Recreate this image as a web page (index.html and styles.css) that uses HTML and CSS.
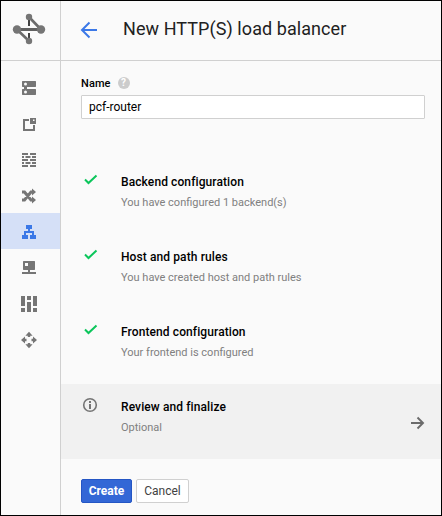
FILE: index.html
```html
<!DOCTYPE html>
<html lang="en">
<head>
<meta charset="utf-8">
<title>New HTTP(S) load balancer</title>
<link rel="stylesheet" href="styles.css">
</head>
<body>
<div class="window">
  <aside class="sidebar">
    <div class="product">
      <svg class="logo" viewBox="0 0 34 34"><path d="M17 5v9M17 21v8" stroke="#424242" stroke-width="2"/><path d="M17 5l12 12.500M5 17.500L17 29" stroke="#6b6b6b" stroke-width="2.600"/><path d="M5 17.500h24" stroke="#616161" stroke-width="3"/><g fill="#757575"><circle cx="5" cy="17.500" r="4.200"/><circle cx="29" cy="17.500" r="4.200"/><circle cx="17" cy="5" r="3.200"/><circle cx="17" cy="29" r="3.200"/></g></svg>
    </div>
    <nav class="nav">
      <a class="item"><svg viewBox="0 0 18 18"><path fill-rule="evenodd" d="M2.500 3h13l.5.5v5l-.5.500H7v2h8.500l.5.500v5l-.5.500h-13l-.5-.5v-5l.5-.500H4V9H2.500L2 8.500v-5zM5.500 4.600a1.500 1.500 0 1 0 0 3a1.500 1.500 0 1 0 0-3zM5.500 12.500a1.500 1.500 0 1 0 0 3a1.500 1.500 0 1 0 0-3z"/></svg></a>
      <a class="item"><svg viewBox="0 0 18 18"><path d="M3 5h6v2H5v8h8v-4h2v6H3z"/><path fill-rule="evenodd" d="M10 4h6v6h-6zM13 5.500v1.500h1.500V5.500z"/></svg></a>
      <a class="item"><svg viewBox="0 0 18 18"><path d="M2 3h6v2H2zM10 3h6v2h-6zM2 6h2v2H2zM5.500 6h5v2h-5zM12 6h4v2h-4zM2 9h6v2H2zM10 9h6v2h-6zM2 12h2v2H2zM5.500 12h5v2h-5zM12 12h4v2h-4zM2 15h6v2H2zM10 15h6v2h-6z"/></svg></a>
      <a class="item"><svg viewBox="0 0 18 18"><path d="M2 6h2.500l6.500 8h2M2 14h2.500l6.500-8h2" fill="none" stroke="currentColor" stroke-width="3"/><path d="M12 2.600L16 6l-4 3.500zM12 10.500L16 14l-4 3.500z"/></svg></a>
      <a class="item active"><svg viewBox="0 0 18 18"><path d="M6 3h6v4h-2v2h4v4h2v4h-6v-4h2v-2H6v2h2v4H2v-4h2V9h4V7H6z"/></svg></a>
      <a class="item"><svg viewBox="0 0 18 18"><path fill-rule="evenodd" d="M3.500 3h11l.5.5v8l-.5.500H10v2h6v2H2v-2h6v-2H3.500l-.5-.5v-8zM5 5v3h3V5z"/></svg></a>
      <a class="item"><svg viewBox="0 0 18 18"><path d="M1 2h4v10H1zM1 14h4v4H1zM7 2h4v4H7zM7 8h4v10H7zM13 2h4v10h-4zM13 14h4v4h-4z"/></svg></a>
      <a class="item"><svg viewBox="0 0 18 18"><path d="M9 1.700l3.600 4H10.200V7H7.800V5.700H5.400zM9 18.300l-3.600-4h2.400V13h2.400v1.300h2.400zM1 10l4-3.500v2.300h1.500v2.400H5v2.300zM17 10l-4 3.500v-2.300h-1.500V8.800H13V6.500z"/></svg></a>
    </nav>
  </aside>
  <main class="main">
    <header class="header">
      <svg class="back" viewBox="0 0 18 18"><path d="M9.500 1.500L2 9l7.500 7.500M2 9h15" fill="none" stroke="#3b78e7" stroke-width="2"/></svg>
      <h1>New HTTP(S) load balancer</h1>
    </header>
    <div class="field">
      <label class="label" for="name">Name <span class="help">?</span></label>
      <input class="input" id="name" type="text" value="pcf-router">
    </div>
    <section class="steps">
      <div class="step"><svg class="mark" viewBox="0 0 18 18"><path d="M4 8.500l3.500 3.500L15.500 4.500" fill="none" stroke="#0bc65b" stroke-width="2"/></svg><div class="copy"><h2>Backend configuration</h2><p>You have configured 1 backend(s)</p></div></div>
      <div class="step"><svg class="mark" viewBox="0 0 18 18"><path d="M4 8.500l3.500 3.500L15.500 4.500" fill="none" stroke="#0bc65b" stroke-width="2"/></svg><div class="copy"><h2>Host and path rules</h2><p>You have created host and path rules</p></div></div>
      <div class="step"><svg class="mark" viewBox="0 0 18 18"><path d="M4 8.500l3.500 3.500L15.500 4.500" fill="none" stroke="#0bc65b" stroke-width="2"/></svg><div class="copy"><h2>Frontend configuration</h2><p>Your frontend is configured</p></div></div>
      <div class="step current"><svg class="mark" viewBox="0 0 18 18"><circle cx="9" cy="9" r="6.300" fill="none" stroke="#757575" stroke-width="1.600"/><path d="M8 5h2v2H8zM8 8h2v5H8z" fill="#757575"/></svg><div class="copy"><h2>Review and finalize</h2><p>Optional</p></div><svg class="go" viewBox="0 0 16 16"><path d="M2 8h12M8.500 2.500L14 8l-5.500 5.500" fill="none" stroke="#6b6b6b" stroke-width="1.900"/></svg></div>
    </section>
    <footer class="actions"><button class="button primary">Create</button><button class="button">Cancel</button></footer>
  </main>
</div>
</body>
</html>
```
FILE: styles.css
```css
* { box-sizing: border-box; }
body { margin: 0; font-family: Roboto, "Liberation Sans", sans-serif; color: #000; }
svg { display: block; flex: none; }
h1, h2, p { margin: 0; }
.window { display: flex; width: 442px; height: 516px; border: 1px solid #000; background: #fafafa; overflow: hidden; }
.sidebar { width: 60px; border-right: 1px solid #d0d0d0; }
.product { height: 60px; border-bottom: 1px solid #d0d0d0; padding: 11px 0 0 11px; }
.logo { width: 34px; height: 34px; }
.nav { padding-top: 8px; }
.item { display: flex; align-items: center; height: 36px; padding-left: 19px; color: #757575; }
.item svg { width: 18px; height: 18px; fill: currentColor; overflow: visible; }
.item.active { background: #d5e0f7; color: #3b78e7; }
.main { flex: 1; min-width: 0; }
.header { display: flex; align-items: flex-start; height: 60px; padding: 20px 0 0 19px; border-bottom: 1px solid #d0d0d0; }
.back { width: 18px; height: 18px; }
h1 { margin: -4px 0 0 25px; font-size: 18px; line-height: 24px; font-weight: 400; letter-spacing: .07px; color: #212121; white-space: nowrap; }
.field { height: 98px; padding: 14px 16px 0 20px; }
.label { display: flex; align-items: center; gap: 7px; height: 16px; font-size: 11px; font-weight: 500; letter-spacing: .1px; }
.help { width: 12px; height: 12px; border-radius: 50%; background: #ccc; color: #fff; font-size: 10px; line-height: 12px; font-weight: 700; text-align: center; }
.input { display: block; width: 344px; height: 24px; margin-top: 4px; padding: 0 7px; border: 1px solid #d0d0d0; border-radius: 1px; background: #fff; font: 12px Roboto, sans-serif; color: #000; outline: 0; }
.step { display: flex; height: 75px; padding: 12px 16px 0 20px; }
.mark { width: 18px; height: 18px; }
.copy { flex: 1; margin-left: 22px; padding-top: 2px; }
h2 { font-size: 12px; line-height: 18px; font-weight: 500; letter-spacing: .1px; }
p { margin-top: 3px; font-size: 11px; line-height: 17px; color: #808080; }
.current { background: #f1f1f1; }
.go { width: 16px; height: 16px; margin-top: 19px; }
.actions { display: flex; gap: 4px; padding: 20px 0 0 20px; }
.button { width: 53px; height: 24px; padding: 0; border: 1px solid #d0d0d0; border-radius: 2px; background: #fff; color: #424242; font: 12px Roboto, sans-serif; }
.primary { width: 51px; border-color: #2456c4; background: #3367d6; color: #fff; font-weight: 700; }
```
